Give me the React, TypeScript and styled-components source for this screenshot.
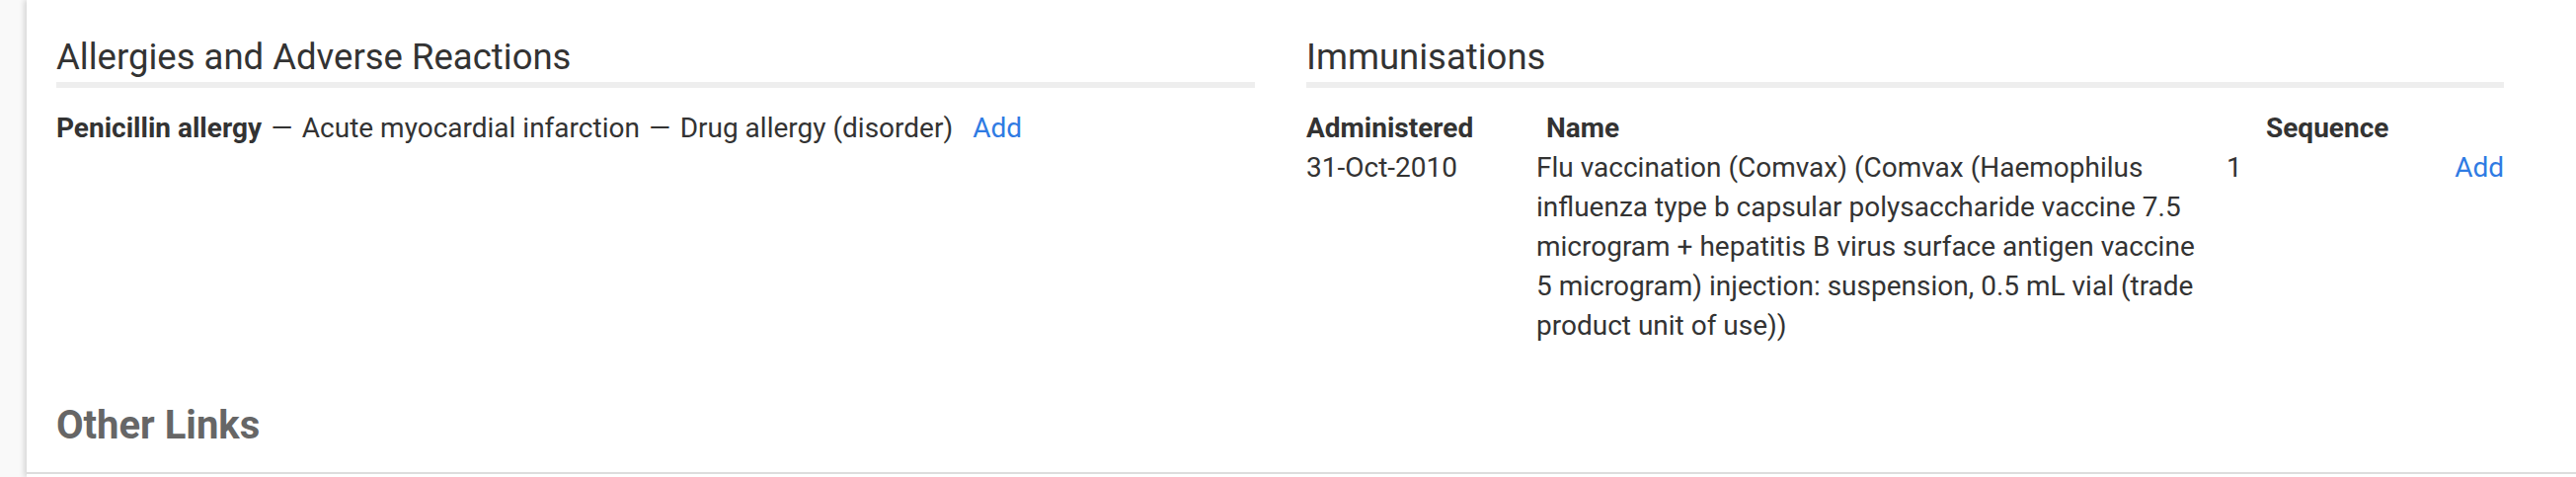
import React from "react";
import styled, { createGlobalStyle } from "styled-components";

const GlobalStyle = createGlobalStyle`
  html, body { margin: 0; padding: 0; background: #fff; }
  body {
    font-family: Roboto, "Liberation Sans", Arial, sans-serif;
    color: #333;
    width: 2609px;
    height: 483px;
    overflow: hidden;
  }
`;

const Page = styled.div`
  display: flex;
  width: 2609px;
  height: 483px;
  background: #f9f9f9;
`;

const Sidebar = styled.aside`
  flex: 0 0 27px;
  background: #f9f9f9;
`;

const Main = styled.main`
  flex: 1;
  position: relative;
  z-index: 1;
  display: flex;
  flex-direction: column;
  background: #fff;
  box-shadow: -3px 0 5px rgba(0, 0, 0, 0.13);
`;

const Content = styled.div`
  padding: 38px 73px 0 30px;
`;

const Columns = styled.div`
  display: grid;
  grid-template-columns: 1214px 1213px;
  column-gap: 52px;
  align-items: start;
`;

const Section = styled.section`
  display: flex;
  flex-direction: column;
`;

const SectionTitle = styled.h3`
  margin: 0;
  font-size: 36.5px;
  line-height: 39.6px;
  font-weight: 400;
  color: #333;
  padding-bottom: 5.4px;
  border-bottom: 6px solid #eee;
`;

const SectionBody = styled.div`
  margin-top: 21px;
  font-size: 28px;
  line-height: 40px;
  color: #333;
`;

const Strong = styled.strong`
  font-weight: 700;
`;

const Dash = styled.span`
  margin: 0 2.5px;
`;

const Link = styled.a<{ $gap?: number }>`
  color: #2f7be3;
  text-decoration: none;
  cursor: pointer;
  margin-left: ${(p) => p.$gap ?? 0}px;
`;

const Table = styled.div`
  display: grid;
  grid-template-columns: 233px 699px 1fr auto;
  font-size: 28px;
  line-height: 40px;
`;

const HeadCell = styled.div<{ $indent?: number }>`
  font-weight: 700;
  padding-left: ${(p) => p.$indent ?? 0}px;
  white-space: nowrap;
`;

const Cell = styled.div<{ $right?: boolean; $padRight?: number }>`
  text-align: ${(p) => (p.$right ? "right" : "left")};
  padding-right: ${(p) => p.$padRight ?? 0}px;
`;

const OtherLinks = styled.div`
  margin-top: 59px;
  padding: 0 0 25px 30px;
  border-bottom: 2px solid #ddd;
`;

const OtherLinksTitle = styled.h4`
  margin: 0;
  font-size: 40px;
  line-height: 44px;
  font-weight: 700;
  color: #666;
`;

export default function App() {
  return (
    <>
      <GlobalStyle />
      <Page>
        <Sidebar />
        <Main>
          <Content>
            <Columns>
              <Section>
                <SectionTitle>Allergies and Adverse Reactions</SectionTitle>
                <SectionBody>
                  <Strong>Penicillin allergy</Strong> <Dash>—</Dash> Acute myocardial infarction <Dash>—</Dash> Drug
                  allergy (disorder)
                  <Link $gap={20}>Add</Link>
                </SectionBody>
              </Section>
              <Section>
                <SectionTitle>Immunisations</SectionTitle>
                <SectionBody>
                  <Table>
                    <HeadCell>Administered</HeadCell>
                    <HeadCell $indent={10}>Name</HeadCell>
                    <HeadCell $indent={40}>Sequence</HeadCell>
                    <HeadCell />
                    <Cell>31-Oct-2010</Cell>
                    <Cell $padRight={11}>
                      Flu vaccination (Comvax) (Comvax (Haemophilus influenza type b capsular polysaccharide vaccine 7.5
                      microgram + hepatitis B virus surface antigen vaccine 5 microgram) injection: suspension, 0.5 mL
                      vial (trade product unit of use))
                    </Cell>
                    <Cell>1</Cell>
                    <Cell $right>
                      <Link>Add</Link>
                    </Cell>
                  </Table>
                </SectionBody>
              </Section>
            </Columns>
          </Content>
          <OtherLinks>
            <OtherLinksTitle>Other Links</OtherLinksTitle>
          </OtherLinks>
        </Main>
      </Page>
    </>
  );
}
